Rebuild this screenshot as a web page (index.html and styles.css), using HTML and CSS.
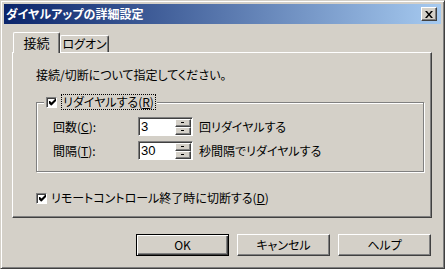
FILE: index.html
```html
<!DOCTYPE html>
<html lang="ja">
<head>
<meta charset="utf-8">
<title>ダイヤルアップの詳細設定</title>
<link rel="stylesheet" href="styles.css">
</head>
<body>

<div class="window">
    <div class="titlebar">
        <span class="title">ダイヤルアップの詳細設定</span>
        <span class="close">
            <svg width="8" height="7" viewBox="0 0 8 7"><path d="M0 0h2l2 2.5L6 0h2L5 3.5 8 7H6L4 4.5 2 7H0l3-3.5z" fill="#000"/></svg>
        </span>
    </div>

    <div class="content">
        <div class="tabs">
            <div class="tab active">接続</div>
            <div class="tab">ログオン</div>
        </div>

        <div class="panel">
            <p class="intro">接続/切断について指定してください。</p>

            <div class="group">
                <div class="legend">
                    <span class="check"><svg width="7" height="7" viewBox="0 0 7 7"><path d="M0 2h1l1.5 1.5L6 0h1v2L2.5 6.5H2L0 4.5z" fill="#000"/></svg></span>
                    <span class="focus">リダイヤルする(<u>R</u>)</span>
                </div>
                <div class="row">
                    <span class="label">回数(<u>C</u>):</span>
                    <div class="spin"><span class="val">3</span><span class="arrows"><i class="up"></i><i class="down"></i></span></div>
                    <span class="suffix">回リダイヤルする</span>
                </div>
                <div class="row">
                    <span class="label">間隔(<u>T</u>):</span>
                    <div class="spin"><span class="val">30</span><span class="arrows"><i class="up"></i><i class="down"></i></span></div>
                    <span class="suffix">秒間隔でリダイヤルする</span>
                </div>
            </div>

            <div class="checkrow">
                <span class="check"><svg width="7" height="7" viewBox="0 0 7 7"><path d="M0 2h1l1.5 1.5L6 0h1v2L2.5 6.5H2L0 4.5z" fill="#000"/></svg></span>
                <span>リモートコントロール終了時に切断する(<u>D</u>)</span>
            </div>
        </div>

        <div class="buttons">
            <div class="btn default">OK</div>
            <div class="btn">キャンセル</div>
            <div class="btn">ヘルプ</div>
        </div>
    </div>
</div>

</body>
</html>
```

FILE: styles.css
```css
body{
    margin: 0;
    background-color: #d4d0c8;
    font-family: "Noto Sans CJK JP", sans-serif;
    font-size: 12px;
    color: #000;
    font-feature-settings: "palt";
}

u{
    text-decoration: underline;
    text-underline-offset: 1px;
}

.window{
    width: 445px;
    height: 269px;
    box-sizing: border-box;
    border: 1px solid;
    border-color: #d4d0c8 #404040 #404040 #d4d0c8;
    box-shadow: inset 1px 1px #fff, inset -1px -1px #808080;
    padding: 3px;
    display: flex;
    flex-direction: column;
}

.titlebar{
    height: 20px;
    display: flex;
    align-items: center;
    justify-content: space-between;
    padding: 0 4px 0 2px;
    background: linear-gradient(to right, #0a246a, #a6caf0);
}

.title{
    color: #fff;
    font-weight: bold;
    font-size: 12px;
    line-height: 14px;
}

.close{
    width: 14px;
    height: 12px;
    display: flex;
    align-items: center;
    justify-content: center;
    background-color: #d4d0c8;
    border: 1px solid;
    border-color: #fff #404040 #404040 #fff;
    box-shadow: inset -1px -1px #808080;
}

.content{
    flex: 1;
    padding: 8px 9px 0 8px;
    display: flex;
    flex-direction: column;
}

.tabs{
    display: flex;
    align-items: flex-end;
    height: 21px;
    margin-bottom: -1px;
    position: relative;
    z-index: 1;
}

.tab{
    box-sizing: border-box;
    height: 17px;
    width: 49px;
    line-height: 16px;
    text-align: center;
    background-color: #d4d0c8;
    border-top: 1px solid #fff;
    border-left: 1px solid #fff;
    border-right: 1px solid #404040;
    box-shadow: inset -1px 0 #808080;
    border-radius: 2px 2px 0 0;
    margin-bottom: 1px;
}

.tab.active{
    height: 21px;
    width: 47px;
    margin-left: 1px;
    margin-bottom: 0;
    line-height: 19px;
    font-size: 13px;
}

.panel{
    box-sizing: border-box;
    height: 166px;
    border: 1px solid;
    border-color: #fff #404040 #404040 #fff;
    box-shadow: inset -1px -1px #808080;
    padding: 15px 23px 0 23px;
}

.intro{
    margin: 0;
    line-height: 14px;
}

.group{
    position: relative;
    margin-top: 20px;
    width: 370px;
    border: 1px solid #808080;
    box-shadow: inset 1px 1px #fff, 1px 1px #fff;
    padding: 14px 0 11px 16px;
}

.legend{
    position: absolute;
    top: -8px;
    left: 7px;
    padding: 0 2px;
    display: flex;
    align-items: center;
    background-color: #d4d0c8;
    line-height: 14px;
}

.check{
    width: 11px;
    height: 11px;
    box-sizing: border-box;
    display: flex;
    align-items: center;
    justify-content: center;
    background-color: #fff;
    border: 1px solid;
    border-color: #808080 #fff #fff #808080;
    box-shadow: inset 1px 1px #404040;
    padding: 1px 0 0 1px;
}

.focus{
    margin-left: 5px;
    padding: 0 1px;
    outline: 1px dotted #000;
}

.row{
    display: flex;
    align-items: center;
    height: 19px;
}

.row + .row{
    margin-top: 5px;
}

.label{
    width: 85px;
}

.spin{
    box-sizing: border-box;
    width: 55px;
    height: 19px;
    display: flex;
    background-color: #fff;
    border: 1px solid;
    border-color: #808080 #fff #fff #808080;
    box-shadow: inset 1px 1px #404040;
    padding: 1px 1px 0 2px;
}

.val{
    flex: 1;
    font-family: "Liberation Sans", sans-serif;
    font-size: 13px;
    line-height: 16px;
}

.arrows{
    display: flex;
    flex-direction: column;
    width: 16px;
}

.arrows i{
    flex: 1;
    position: relative;
    background-color: #d4d0c8;
    border: 1px solid;
    border-color: #fff #404040 #404040 #fff;
    box-shadow: inset -1px -1px #808080;
}

.arrows i::after{
    content: "";
    position: absolute;
    left: 5px;
    top: 2px;
    width: 3px;
    height: 1px;
    background-color: #000;
}

.suffix{
    margin-left: 6px;
}

.checkrow{
    display: flex;
    align-items: center;
    margin-top: 19px;
    line-height: 14px;
}

.checkrow .check{
    margin-right: 4px;
}

.buttons{
    display: flex;
    justify-content: flex-end;
    gap: 8px;
    margin-top: 16px;
    padding-right: 1px;
}

.btn{
    box-sizing: border-box;
    width: 93px;
    height: 22px;
    line-height: 20px;
    text-align: center;
    background-color: #d4d0c8;
    border: 1px solid;
    border-color: #fff #404040 #404040 #fff;
    box-shadow: inset -1px -1px #808080;
}

.btn.default{
    border-color: #000;
    box-shadow: inset 1px 1px #fff, inset -1px -1px #404040, inset -2px -2px #808080;
}
```
